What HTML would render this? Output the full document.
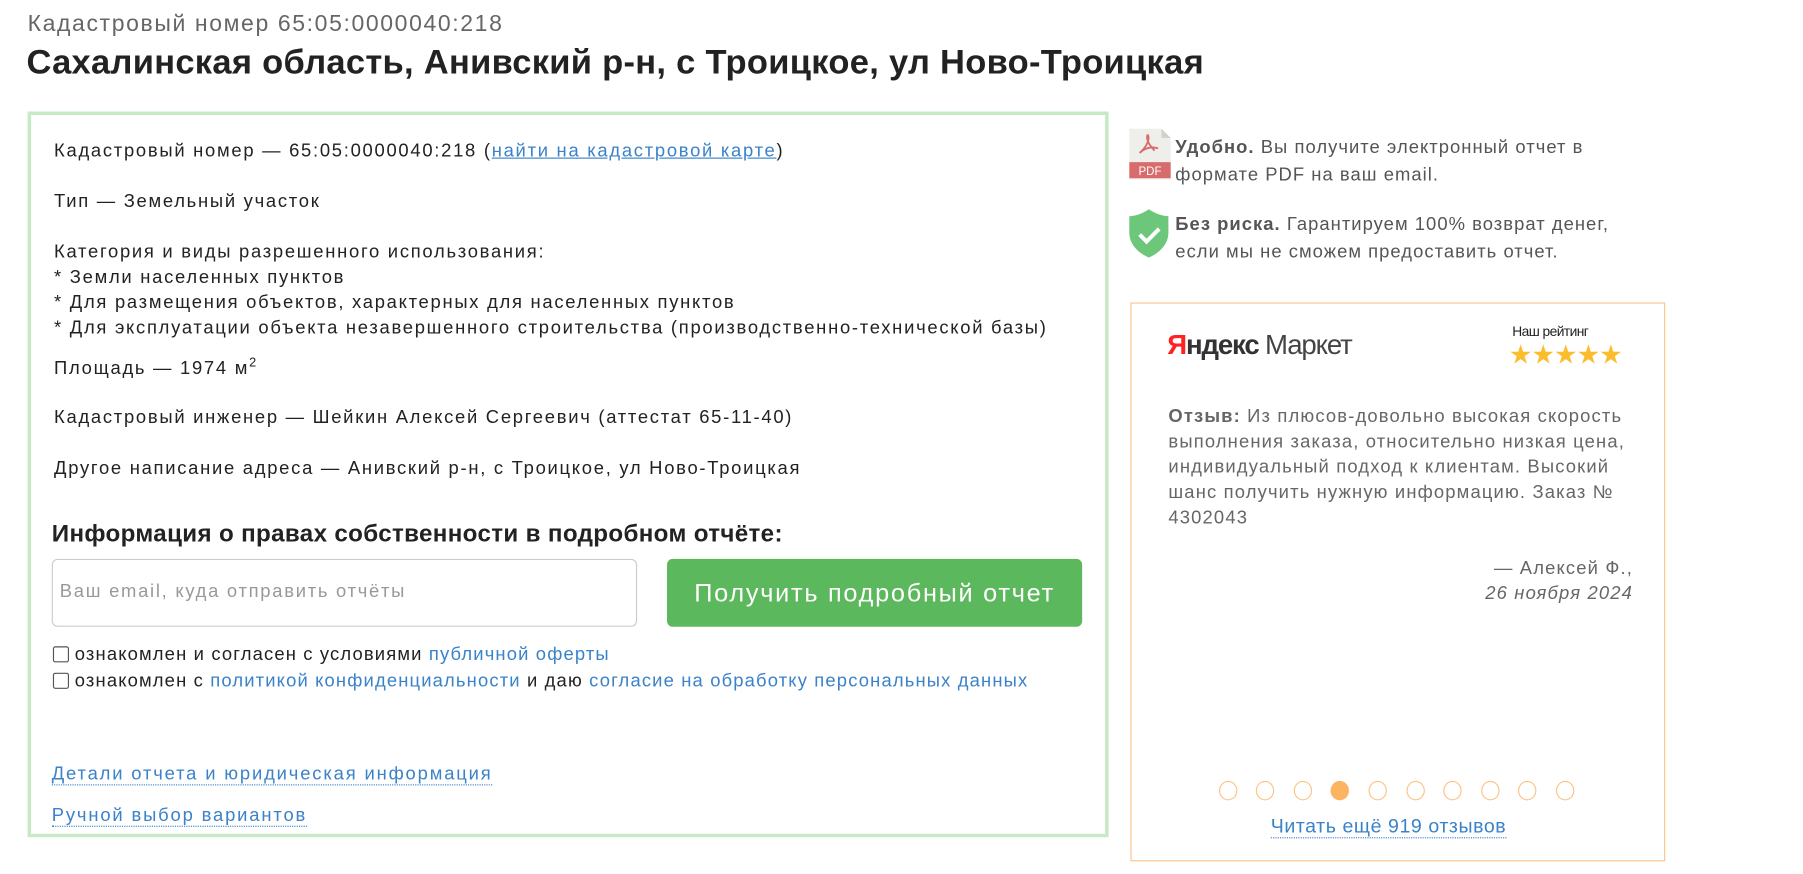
<!DOCTYPE html>
<html><head><meta charset="utf-8">
<style>
html,body{margin:0;padding:0;background:#fff;width:1803px;height:873px;overflow:hidden}
#w{position:absolute;left:0;top:0;width:1568px;height:760px;transform:scale(1.150);transform-origin:0 0;font-family:"Liberation Sans",sans-serif;color:#222}
.a{position:absolute;white-space:nowrap}
.t{font-size:16px;line-height:22px;letter-spacing:1.5px}
a{color:#3a82c9;text-decoration:none}
.u{text-decoration:underline}
.d{border-bottom:1px dotted #3a82c9}
.cb{display:inline-block;width:12px;height:12px;border:1px solid #555;border-radius:2px;vertical-align:-2px;margin-right:5px}
.dot{position:absolute;top:679px;width:16px;height:17px;border:1px solid #fcc283;border-radius:50%;box-sizing:border-box}
.g{color:#555}
</style></head><body><div id="w">
<div class="a" style="left:24px;top:10px;font-size:20px;color:#666;letter-spacing:1.4px">Кадастровый номер 65:05:0000040:218</div>
<div class="a" style="left:23px;top:38px;font-size:30px;font-weight:bold;color:#222;letter-spacing:0.25px">Сахалинская область, Анивский р-н, с Троицкое, ул Ново-Троицкая</div>

<div class="a" style="left:24px;top:97px;width:934px;height:625px;border:3px solid #c6e9c6"></div>
<div class="a t" style="left:47px;top:121px">Кадастровый номер — 65:05:0000040:218 (<a class="u" href="#">найти на кадастровой карте</a>)</div>
<div class="a t" style="left:47px;top:165px">Тип — Земельный участок</div>
<div class="a t" style="left:47px;top:209px">Категория и виды разрешенного использования:<br>* Земли населенных пунктов<br>* Для размещения объектов, характерных для населенных пунктов<br>* Для эксплуатации объекта незавершенного строительства (производственно-технической базы)</div>
<div class="a t" style="left:47px;top:310px">Площадь — 1974 м<sup style="font-size:11px;line-height:0">2</sup></div>
<div class="a t" style="left:47px;top:353px">Кадастровый инженер — Шейкин Алексей Сергеевич (аттестат 65-11-40)</div>
<div class="a t" style="left:47px;top:397px">Другое написание адреса — Анивский р-н, с Троицкое, ул Ново-Троицкая</div>
<div class="a" style="left:45px;top:453px;font-size:21px;font-weight:bold;color:#222;letter-spacing:0.3px">Информация о правах собственности в подробном отчёте:</div>
<div class="a" style="left:45px;top:486px;width:507px;height:57px;border:1px solid #ccc;border-radius:5px"></div>
<div class="a" style="left:52px;top:506px;font-size:16px;color:#999;letter-spacing:1.5px">Ваш email, куда отправить отчёты</div>
<div class="a" style="left:580px;top:486px;width:361px;height:59px;background:#5cb85c;border-radius:5px;color:#fff;font-size:22px;line-height:60px;text-align:center;letter-spacing:1.5px">Получить подробный отчет</div>
<div class="a t" style="left:46px;top:559px;letter-spacing:1px"><span class="cb"></span>ознакомлен и согласен с условиями <a href="#">публичной оферты</a></div>
<div class="a t" style="left:46px;top:582px;letter-spacing:1px"><span class="cb"></span>ознакомлен с <a href="#">политикой конфиденциальности</a> и даю <a href="#">согласие на обработку персональных данных</a></div>
<div class="a t" style="left:45px;top:663px;letter-spacing:1.6px"><a class="d" href="#">Детали отчета и юридическая информация</a></div>
<div class="a t" style="left:45px;top:699px;letter-spacing:1.6px"><a class="d" href="#">Ручной выбор вариантов</a></div>

<svg class="a" style="left:981px;top:111px" width="38" height="46" viewBox="0 0 38 46">
<path d="M1 1h28l8 8v36H1z" fill="#eeeeea"/><path d="M29 1v8h8" fill="#d0d0cc"/>
<rect x="1" y="30" width="36" height="14" fill="#d86b6b"/>
<text x="19" y="41" font-size="10" fill="#fff" text-anchor="middle" font-family="Liberation Sans">PDF</text>
<path d="M17 6c-2 4 2 10 6 14M10 22c4-4 10-6 16-4M17 6c2 3 0 10-7 16" fill="none" stroke="#d86b6b" stroke-width="1.6"/>
</svg>
<div class="a t g" style="left:1022px;top:117px;line-height:24px;letter-spacing:0.9px"><b>Удобно.</b> Вы получите электронный отчет в<br>формате PDF на ваш email.</div>
<svg class="a" style="left:981px;top:181px" width="36" height="44" viewBox="0 0 36 44">
<path d="M18 1C12 5 6 7 1 7v14c0 11 8 18 17 22 9-4 17-11 17-22V7c-5 0-11-2-17-6z" fill="#6cc77a"/>
<path d="M10 23l6 6 11-11" fill="none" stroke="#fff" stroke-width="3.5"/>
</svg>
<div class="a t g" style="left:1022px;top:184px;line-height:24px;letter-spacing:0.9px"><b>Без риска.</b> Гарантируем 100% возврат денег,<br>если мы не сможем предоставить отчет.</div>

<div class="a" style="left:983px;top:263px;width:463px;height:484px;border:1px solid #fbc588"></div>
<div class="a" style="left:1015px;top:287px;font-size:24px;letter-spacing:-1px"><span style="color:#f22;font-weight:bold">Я</span><span style="color:#333;font-weight:bold">ндекс</span><span style="color:#444"> Маркет</span></div>
<div class="a" style="left:1315px;top:281px;font-size:12px;color:#222;letter-spacing:-0.5px">Наш рейтинг</div>
<div class="a" style="left:1312px;top:295px;font-size:23px;color:#fbbd2c;letter-spacing:-1px">★★★★★</div>
<div class="a t" style="left:1016px;top:352px;color:#666;white-space:normal;width:415px;letter-spacing:1px">
<b>Отзыв:</b> Из плюсов-довольно высокая скорость выполнения заказа, относительно низкая цена, индивидуальный подход к клиентам. Высокий шанс получить нужную информацию. Заказ № 4302043</div>
<div class="a t" style="left:1220px;top:484px;width:200px;text-align:right;color:#666;letter-spacing:1px">— Алексей Ф.,<br><i>26 ноября 2024</i></div>
<div class="dot" style="left:1060px"></div><div class="dot" style="left:1092px"></div><div class="dot" style="left:1125px"></div>
<div class="dot" style="left:1157px;background:#fdb462;border-color:#fdb462"></div>
<div class="dot" style="left:1190px"></div><div class="dot" style="left:1223px"></div><div class="dot" style="left:1255px"></div>
<div class="dot" style="left:1288px"></div><div class="dot" style="left:1320px"></div><div class="dot" style="left:1353px"></div>
<div class="a t" style="left:1105px;top:708px;font-size:17px;letter-spacing:0.5px"><a class="d" href="#">Читать ещё 919 отзывов</a></div>
</div></body></html>
